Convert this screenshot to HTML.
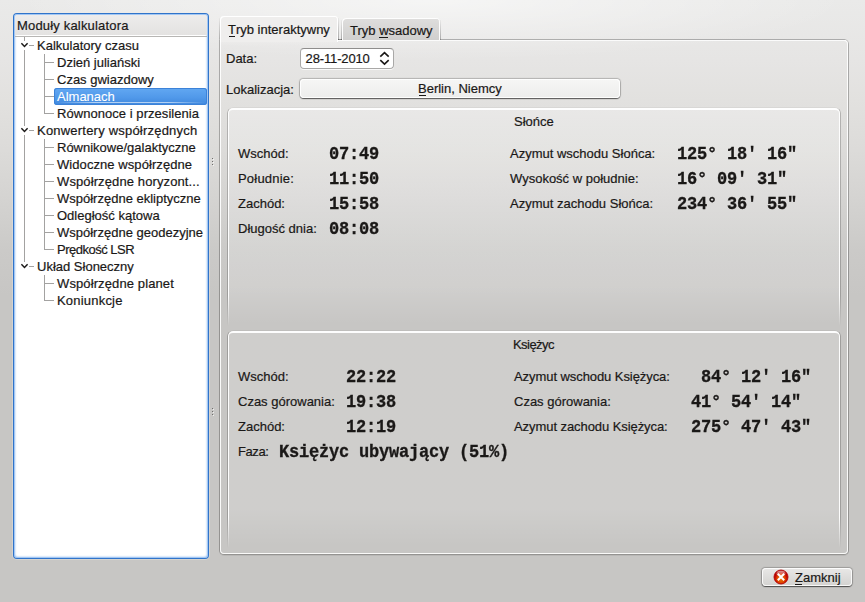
<!DOCTYPE html><html><head><meta charset="utf-8"><title>Kalkulator</title><style>
html,body{margin:0;padding:0;}
body{width:865px;height:602px;overflow:hidden;position:relative;font-family:"Liberation Sans",sans-serif;font-size:13px;color:#1a1817;
 background:radial-gradient(ellipse 420px 60px at 432px 0px, rgba(255,255,255,0.55), rgba(255,255,255,0) 100%),linear-gradient(to bottom,#eaeae9 0px,#e6e5e4 60px,#e2e1df 100px,#dcdbd9 150px,#d4d3d1 200px,#cbcac8 250px,#c7c6c4 295px,#c7c6c4 602px);}
.a{position:absolute;white-space:nowrap;}
.t{position:absolute;white-space:nowrap;line-height:17px;height:17px;-webkit-text-stroke:0.2px currentColor;}
.m{position:absolute;white-space:nowrap;font-family:"Liberation Mono",monospace;font-weight:bold;font-size:17px;line-height:20px;letter-spacing:-0.2px;transform:scaleY(1.1);transform-origin:0 0;-webkit-text-stroke:0.3px currentColor;}
.ln{position:absolute;background:#a3a2a1;}
u{text-decoration:none;position:relative;}
u i{position:absolute;left:0;bottom:0px;height:1px;background:currentColor;}
</style></head><body>
<div class="a" style="left:14px;top:14px;width:194px;height:544px;background:#fff;border-radius:3px;box-shadow:0 0 0 1px #3074ca, 0 0 0 2px rgba(240,236,230,0.35), inset 0 0 2px 1px rgba(90,155,235,0.75);"></div>
<div class="a" style="left:15px;top:15px;width:192px;height:20px;background:linear-gradient(#edecec,#e3e2e1);border-radius:2px 2px 0 0;"></div>
<div class="a" style="left:15px;top:36px;width:192px;height:1px;background:#b7b6b4;"></div>
<div class="t" style="left:17px;top:17px;letter-spacing:0.18px;">Moduły kalkulatora</div>
<div class="t" style="left:37px;top:37px;letter-spacing:0.00px;">Kalkulatory czasu</div>
<div class="t" style="left:57px;top:54px;letter-spacing:0.00px;">Dzień juliański</div>
<div class="t" style="left:57px;top:71px;letter-spacing:0.00px;">Czas gwiazdowy</div>
<div class="a" style="left:54px;top:88px;width:153px;height:17px;border-radius:3px;background:linear-gradient(#62a8f2,#5199ea 55%,#4088dd);box-shadow:inset 0 0 0 1px #3c82d8;"></div>
<div class="a" style="left:57px;top:102px;width:148px;height:1px;background:linear-gradient(to right,rgba(255,255,255,0),rgba(255,255,255,0.6) 25%,rgba(255,255,255,0.6) 75%,rgba(255,255,255,0));"></div>
<div class="t" style="left:57px;top:88px;color:#fff;-webkit-text-stroke:0.1px #fff;">Almanach</div>
<div class="t" style="left:57px;top:105px;letter-spacing:0.05px;">Równonoce i przesilenia</div>
<div class="t" style="left:37px;top:122px;letter-spacing:0.21px;">Konwertery współrzędnych</div>
<div class="t" style="left:57px;top:139px;letter-spacing:0.00px;">Równikowe/galaktyczne</div>
<div class="t" style="left:57px;top:156px;letter-spacing:0.07px;">Widoczne współrzędne</div>
<div class="t" style="left:57px;top:173px;letter-spacing:0.11px;">Współrzędne horyzont...</div>
<div class="t" style="left:57px;top:190px;letter-spacing:0.00px;">Współrzędne ekliptyczne</div>
<div class="t" style="left:57px;top:207px;letter-spacing:0.00px;">Odległość kątowa</div>
<div class="t" style="left:57px;top:224px;letter-spacing:0.00px;">Współrzędne geodezyjne</div>
<div class="t" style="left:57px;top:241px;letter-spacing:-0.50px;">Prędkość LSR</div>
<div class="t" style="left:37px;top:258px;letter-spacing:0.00px;">Układ Słoneczny</div>
<div class="t" style="left:57px;top:275px;letter-spacing:0.11px;">Współrzędne planet</div>
<div class="t" style="left:57px;top:292px;letter-spacing:0.20px;">Koniunkcje</div>
<div class="ln" style="left:24px;top:37px;width:1px;height:4px;"></div>
<div class="ln" style="left:29px;top:45px;width:5px;height:1px;"></div>
<div class="ln" style="left:24px;top:50px;width:1px;height:72px;"></div>
<svg class="a" style="left:20px;top:42px" width="9" height="7" viewBox="0 0 9 7"><path d="M1.4 1.3 L4.5 4.5 L7.6 1.3" fill="none" stroke="#1a1817" stroke-width="1.45"/></svg>
<div class="ln" style="left:44px;top:54px;width:1px;height:60px;"></div>
<div class="ln" style="left:44px;top:62px;width:10px;height:1px;"></div>
<div class="ln" style="left:44px;top:79px;width:10px;height:1px;"></div>
<div class="ln" style="left:44px;top:96px;width:10px;height:1px;"></div>
<div class="ln" style="left:44px;top:113px;width:10px;height:1px;"></div>
<div class="ln" style="left:24px;top:122px;width:1px;height:4px;"></div>
<div class="ln" style="left:29px;top:130px;width:5px;height:1px;"></div>
<div class="ln" style="left:24px;top:135px;width:1px;height:123px;"></div>
<svg class="a" style="left:20px;top:127px" width="9" height="7" viewBox="0 0 9 7"><path d="M1.4 1.3 L4.5 4.5 L7.6 1.3" fill="none" stroke="#1a1817" stroke-width="1.45"/></svg>
<div class="ln" style="left:44px;top:139px;width:1px;height:111px;"></div>
<div class="ln" style="left:44px;top:147px;width:10px;height:1px;"></div>
<div class="ln" style="left:44px;top:164px;width:10px;height:1px;"></div>
<div class="ln" style="left:44px;top:181px;width:10px;height:1px;"></div>
<div class="ln" style="left:44px;top:198px;width:10px;height:1px;"></div>
<div class="ln" style="left:44px;top:215px;width:10px;height:1px;"></div>
<div class="ln" style="left:44px;top:232px;width:10px;height:1px;"></div>
<div class="ln" style="left:44px;top:249px;width:10px;height:1px;"></div>
<div class="ln" style="left:24px;top:258px;width:1px;height:4px;"></div>
<div class="ln" style="left:29px;top:266px;width:5px;height:1px;"></div>
<svg class="a" style="left:20px;top:263px" width="9" height="7" viewBox="0 0 9 7"><path d="M1.4 1.3 L4.5 4.5 L7.6 1.3" fill="none" stroke="#1a1817" stroke-width="1.45"/></svg>
<div class="ln" style="left:44px;top:275px;width:1px;height:26px;"></div>
<div class="ln" style="left:44px;top:283px;width:10px;height:1px;"></div>
<div class="ln" style="left:44px;top:300px;width:10px;height:1px;"></div>
<div class="a" style="left:212px;top:158px;width:1px;height:1px;background:#6e6d6c;box-shadow:1px 1px 0 rgba(255,255,255,0.7);"></div>
<div class="a" style="left:212px;top:161px;width:1px;height:1px;background:#6e6d6c;box-shadow:1px 1px 0 rgba(255,255,255,0.7);"></div>
<div class="a" style="left:212px;top:164px;width:1px;height:1px;background:#6e6d6c;box-shadow:1px 1px 0 rgba(255,255,255,0.7);"></div>
<div class="a" style="left:212px;top:408px;width:1px;height:1px;background:#6e6d6c;box-shadow:1px 1px 0 rgba(255,255,255,0.7);"></div>
<div class="a" style="left:212px;top:411px;width:1px;height:1px;background:#6e6d6c;box-shadow:1px 1px 0 rgba(255,255,255,0.7);"></div>
<div class="a" style="left:212px;top:414px;width:1px;height:1px;background:#6e6d6c;box-shadow:1px 1px 0 rgba(255,255,255,0.7);"></div>
<div class="a" style="left:220px;top:40px;width:628px;height:514px;border-radius:4px;border-top-left-radius:0;box-shadow:0 0 0 1px rgba(0,0,0,0.2), 0 1px 0 1px rgba(0,0,0,0.07), inset 0 0 0 1px rgba(255,255,255,0.9);"></div>
<div class="a" style="left:342px;top:18px;width:98px;height:22px;border-radius:4px 4px 0 0;background:linear-gradient(#dfdedd,#d0cfce);box-shadow:inset 1px 1px 0 0 rgba(255,255,255,0.95), inset -1px 0 0 0 rgba(255,255,255,0.95);"></div>
<div class="a" style="left:341px;top:20px;width:1px;height:20px;background:linear-gradient(rgba(0,0,0,0.03),rgba(0,0,0,0.28));"></div>
<div class="a" style="left:440px;top:20px;width:1px;height:20px;background:linear-gradient(rgba(0,0,0,0.03),rgba(0,0,0,0.28));"></div>
<div class="a" style="left:338px;top:39px;width:4px;height:1px;background:rgba(0,0,0,0.25);"></div>
<div class="a" style="left:441px;top:39px;width:404px;height:1px;background:rgba(0,0,0,0.07);"></div>
<div class="a" style="left:338px;top:40px;width:508px;height:1px;background:#fbfbfb;"></div>
<div class="a" style="left:220px;top:16px;width:118px;height:26px;border-radius:4px 4px 0 0;background:#efeeed;box-shadow:inset 1px 1px 0 0 #fff, inset -1px 0 0 0 #fff;"></div>
<div class="a" style="left:219px;top:18px;width:1px;height:21px;background:linear-gradient(rgba(0,0,0,0.03),rgba(0,0,0,0.25));"></div>
<div class="a" style="left:338px;top:18px;width:1px;height:22px;background:linear-gradient(rgba(0,0,0,0.03),rgba(0,0,0,0.28));"></div>
<div class="a" style="left:221px;top:36px;width:116px;height:10px;background:linear-gradient(#efeeed,rgba(232,231,230,0));"></div>
<div class="t" style="left:228px;top:21px;"><u>T<i style="width:6px;left:0.5px"></i></u>ryb interaktywny</div>
<div class="t" style="left:350px;top:22px;">Tryb <u>w<i style="width:9px"></i></u>sadowy</div>
<div class="t" style="left:226px;top:50px;">Data:</div>
<div class="a" style="left:300px;top:48px;width:92px;height:19px;border-radius:4px;background:#fff;border:1px solid #a9a8a7;border-top-color:#8e8d8c;box-shadow:0 1px 0 rgba(255,255,255,0.8);"></div>
<div class="t" style="left:305.6px;top:50px;letter-spacing:-0.15px;">28-11-2010</div>
<svg class="a" style="left:378px;top:50px" width="13" height="17" viewBox="0 0 13 17"><path d="M2.3 6.6 L6.5 2.6 L10.7 6.6 M2.3 10.2 L6.5 14.2 L10.7 10.2" fill="none" stroke="#1a1817" stroke-width="1.6"/></svg>
<div class="t" style="left:226px;top:81px;">Lokalizacja:</div>
<div class="a" style="left:300px;top:79px;width:320px;height:19px;border-radius:4px;background:linear-gradient(#f6f6f5,#ededec);box-shadow:0 0 1px 0.5px rgba(0,0,0,0.22), 0 1px 1px 0 rgba(0,0,0,0.5), inset 0 0 0 1px rgba(255,255,255,0.9);"></div>
<div class="t" style="left:418px;top:80px;"><u>B<i style="width:7px;left:1px"></i></u>erlin, Niemcy</div>
<div class="a" style="left:228px;top:108px;width:612px;height:218px;border-radius:5px 5px 0 0;background:linear-gradient(rgba(255,255,255,0.27),rgba(255,255,255,0.16) 82%,rgba(255,255,255,0) 99%);"></div>
<div class="a" style="left:227px;top:107px;width:614px;height:219px;border-radius:6px 6px 0 0;border:1px solid rgba(0,0,0,0.2);border-top-color:rgba(0,0,0,0.04);border-bottom:none;-webkit-mask-image:linear-gradient(#000 0,#000 86%,transparent 100%);mask-image:linear-gradient(#000 0,#000 86%,transparent 100%);box-sizing:border-box;"></div>
<div class="a" style="left:228px;top:108px;width:612px;height:218px;border-radius:5px 5px 0 0;border:1px solid rgba(255,255,255,0.95);border-top-width:2px;border-bottom:none;-webkit-mask-image:linear-gradient(#000 0,#000 86%,transparent 100%);mask-image:linear-gradient(#000 0,#000 86%,transparent 100%);box-sizing:border-box;"></div>
<div class="a" style="left:228px;top:331px;width:612px;height:217px;border-radius:5px 5px 0 0;background:linear-gradient(rgba(255,255,255,0.14),rgba(255,255,255,0.14) 82%,rgba(255,255,255,0) 99%);"></div>
<div class="a" style="left:227px;top:330px;width:614px;height:218px;border-radius:6px 6px 0 0;border:1px solid rgba(0,0,0,0.2);border-top-color:rgba(0,0,0,0.04);border-bottom:none;-webkit-mask-image:linear-gradient(#000 0,#000 86%,transparent 100%);mask-image:linear-gradient(#000 0,#000 86%,transparent 100%);box-sizing:border-box;"></div>
<div class="a" style="left:228px;top:331px;width:612px;height:217px;border-radius:5px 5px 0 0;border:1px solid rgba(255,255,255,0.95);border-top-width:2px;border-bottom:none;-webkit-mask-image:linear-gradient(#000 0,#000 86%,transparent 100%);mask-image:linear-gradient(#000 0,#000 86%,transparent 100%);box-sizing:border-box;"></div>
<div class="t" style="left:514px;top:113px;">Słońce</div>
<div class="t" style="left:513px;top:336px;letter-spacing:-0.55px;">Księżyc</div>
<div class="t" style="left:238px;top:145px;">Wschód:</div>
<div class="m" style="left:329px;top:143.5px;">07:49</div>
<div class="t" style="left:238px;top:170px;"><span style='letter-spacing:0.2px'>Południe:</span></div>
<div class="m" style="left:329px;top:168.5px;">11:50</div>
<div class="t" style="left:238px;top:195px;">Zachód:</div>
<div class="m" style="left:329px;top:193.5px;">15:58</div>
<div class="t" style="left:238px;top:220px;">Długość dnia:</div>
<div class="m" style="left:329px;top:218.5px;">08:08</div>
<div class="t" style="left:510px;top:145px;">Azymut wschodu Słońca:</div>
<div class="m" style="left:677px;top:143.5px;">125° 18' 16"</div>
<div class="t" style="left:510px;top:170px;">Wysokość w południe:</div>
<div class="m" style="left:677px;top:168.5px;">16° 09' 31"</div>
<div class="t" style="left:510px;top:195px;">Azymut zachodu Słońca:</div>
<div class="m" style="left:677px;top:193.5px;">234° 36' 55"</div>
<div class="t" style="left:238px;top:368px;">Wschód:</div>
<div class="m" style="left:346px;top:366.5px;">22:22</div>
<div class="t" style="left:238px;top:393px;">Czas górowania:</div>
<div class="m" style="left:346px;top:391.5px;">19:38</div>
<div class="t" style="left:238px;top:418px;">Zachód:</div>
<div class="m" style="left:346px;top:416.5px;">12:19</div>
<div class="t" style="left:238px;top:443px;letter-spacing:-0.4px;">Faza:</div>
<div class="m" style="left:279px;top:441.5px;">Księżyc ubywający (51%)</div>
<div class="t" style="left:514px;top:368px;"><span style='letter-spacing:-0.07px'>Azymut wschodu Księżyca:</span></div>
<div class="m" style="left:701px;top:366.5px;">84° 12' 16"</div>
<div class="t" style="left:514px;top:393px;">Czas górowania:</div>
<div class="m" style="left:691px;top:391.5px;">41° 54' 14"</div>
<div class="t" style="left:514px;top:418px;"><span style='letter-spacing:-0.07px'>Azymut zachodu Księżyca:</span></div>
<div class="m" style="left:691px;top:416.5px;">275° 47' 43"</div>
<div class="a" style="left:762px;top:568px;width:90px;height:18px;border-radius:4px;background:linear-gradient(#e9e8e7,#d3d2d0);box-shadow:0 0 1px 0.5px rgba(0,0,0,0.22), 0 1px 1px 0 rgba(0,0,0,0.5), inset 0 0 0 1px rgba(255,255,255,0.85);"></div>
<svg class="a" style="left:773px;top:568.6px" width="16" height="16" viewBox="0 0 16 16"><defs><radialGradient id="rg" cx="0.5" cy="0.62" r="0.5"><stop offset="0" stop-color="#ee7a00"/><stop offset="0.55" stop-color="#de4a00"/><stop offset="0.85" stop-color="#c80a00"/><stop offset="1" stop-color="#b00000"/></radialGradient><linearGradient id="gl" x1="0" y1="0" x2="0" y2="1"><stop offset="0" stop-color="#fff" stop-opacity="0.6"/><stop offset="1" stop-color="#fff" stop-opacity="0.05"/></linearGradient></defs><circle cx="8" cy="8" r="7" fill="url(#rg)" stroke="#b40404" stroke-width="0.9"/><ellipse cx="8" cy="4.6" rx="4.6" ry="2.9" fill="url(#gl)"/><path d="M4.8 4.8 L11.2 11.2 M11.2 4.8 L4.8 11.2" stroke="#fff" stroke-width="2" stroke-linecap="butt"/></svg>
<div class="t" style="left:795px;top:569px;"><u>Z<i style="width:7px"></i></u>amknij</div>
</body></html>
